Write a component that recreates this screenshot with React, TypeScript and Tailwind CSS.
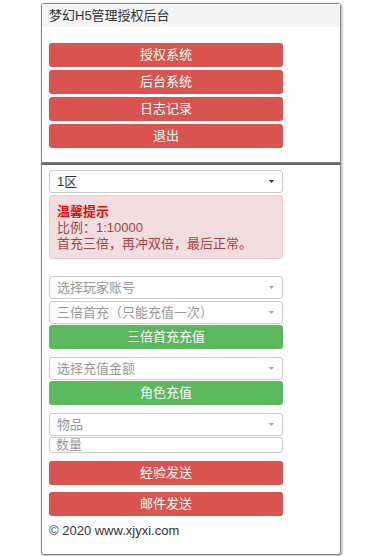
const FONT = "font-['Liberation_Sans','Noto_Sans_CJK_SC',sans-serif]";

function RedButton({ label, className = '' }: { label: string; className?: string }) {
  return (
    <button
      className={`flex h-6 w-full items-center justify-center rounded-[3px] bg-[#d9534f] text-[13px] text-white ${className}`}
    >
      {label}
    </button>
  );
}

function GreenButton({ label }: { label: string }) {
  return (
    <button className="flex h-6 w-full items-center justify-center rounded-[3px] bg-[#5cb85c] text-[13px] text-white">
      {label}
    </button>
  );
}

function FakeSelect({ text, placeholder = false }: { text: string; placeholder?: boolean }) {
  return (
    <div className="flex h-[23px] w-full items-center justify-between rounded-[3px] border border-[#ccc] bg-white pl-[7px] pr-[8px]">
      <span className={`text-[13px] ${placeholder ? 'text-[#999]' : 'text-[#333]'}`}>{text}</span>
      <svg width="5" height="3" viewBox="0 0 5 3">
        <path d="M0 0h5L2.5 3z" fill={placeholder ? '#aaa' : '#333'} />
      </svg>
    </div>
  );
}

export default function App() {
  return (
    <div className={`${FONT} min-h-[556px] bg-white pt-[3px] pl-[41px]`}>
      <div className="w-[300px]">
        {/* top panel */}
        <div className="rounded-t-[3px] border border-[#888] shadow-[1px_1px_3px_rgba(0,0,0,0.35)]">
          <div className="flex h-[23px] items-center bg-[#f5f5f5] px-[7px] text-[13px] text-[#333]">
            梦幻H5管理授权后台
          </div>
          <div className="ml-[7px] flex w-[234px] flex-col gap-[3px] pt-[16px] pb-[14px]">
            <RedButton label="授权系统" />
            <RedButton label="后台系统" />
            <RedButton label="日志记录" />
            <RedButton label="退出" />
          </div>
        </div>

        {/* bottom panel */}
        <div className="rounded-b-[3px] border border-t-2 border-[#888] border-t-[#666] bg-white shadow-[1px_1px_3px_rgba(0,0,0,0.35)]">
          <div className="ml-[7px] flex w-[234px] flex-col pt-[5px] pb-[13px]">
            <FakeSelect text="1区" />
            <div className="mt-[2px] h-[64px] rounded-[3px] border border-[#ebccd1] bg-[#f2dede] px-[7px] pt-[8px] text-[13px] leading-[16px] text-[#a94442]">
              <div className="font-bold text-[#f00]">温馨提示</div>
              <div>比例：1:10000</div>
              <div>首充三倍，再冲双倍，最后正常。</div>
            </div>

            <div className="mt-[17px] flex flex-col gap-[2px]">
              <FakeSelect text="选择玩家账号" placeholder />
              <FakeSelect text="三倍首充（只能充值一次）" placeholder />
            </div>
            <div className="mt-[1px]">
              <GreenButton label="三倍首充充值" />
            </div>

            <div className="mt-[8px]">
              <FakeSelect text="选择充值金额" placeholder />
            </div>
            <div className="mt-[1px]">
              <GreenButton label="角色充值" />
            </div>

            <div className="mt-[8px]">
              <FakeSelect text="物品" placeholder />
            </div>
            <div className="mt-[1px] flex h-[16px] items-center overflow-hidden rounded-[3px] border border-[#ccc] pl-[6px] text-[13px] text-[#999]">
              数量
            </div>

            <RedButton label="经验发送" className="mt-[8px]" />
            <RedButton label="邮件发送" className="mt-[7px]" />

            <div className="mt-[5px] text-[13px] leading-[20px] text-[#333]">© 2020 www.xjyxi.com</div>
          </div>
        </div>
      </div>
    </div>
  );
}
